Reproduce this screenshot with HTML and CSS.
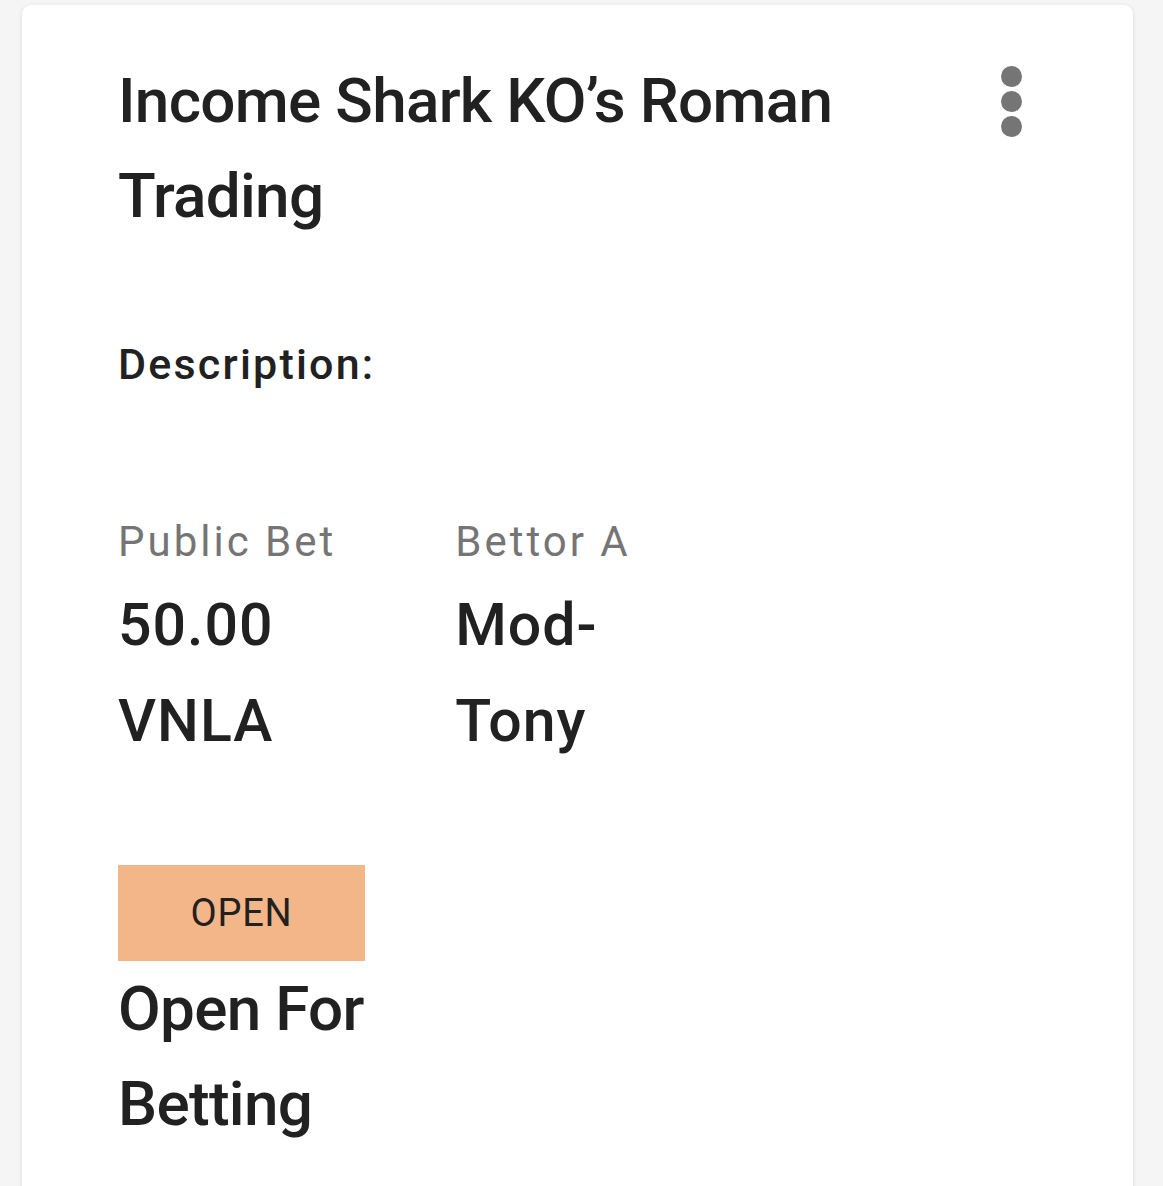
FILE: index.html
```html
<!DOCTYPE html>
<html lang="en">
<head>
<meta charset="utf-8">
<link rel="stylesheet" href="styles.css">
</head>
<body>
<div class="card">
  <div class="header">
    <h1 class="title">Income Shark KO’s Roman Trading</h1>
    <div class="kebab" aria-label="More options">
      <span class="dot"></span><span class="dot"></span><span class="dot"></span>
    </div>
  </div>
  <div class="desc">Description:</div>
  <div class="stats">
    <div class="stat">
      <div class="label">Public Bet</div>
      <div class="value">50.00 VNLA</div>
    </div>
    <div class="stat">
      <div class="label">Bettor A</div>
      <div class="value">Mod-Tony</div>
    </div>
  </div>
  <div class="status">
    <div class="chip">OPEN</div>
    <div class="status-text">Open For Betting</div>
  </div>
</div>
</body>
</html>
```
FILE: styles.css
```css
html, body {
  margin: 0;
  padding: 0;
  background: #f5f5f5;
}
body {
  font-family: Roboto, "Liberation Sans", sans-serif;
  color: #212121;
  overflow: hidden;
  height: 1186px;
}
.card {
  margin: 5px 30px 0 22px;
  background: #ffffff;
  border-radius: 9px;
  box-shadow: 0 1px 4px rgba(0,0,0,0.12);
  padding: 48px 111px 60px 96px;
  min-height: 1300px;
  box-sizing: border-box;
}
.header {
  display: flex;
  align-items: flex-start;
  gap: 40px;
}
.title {
  flex: 1;
  margin: 0;
  font-size: 62px;
  font-weight: 500;
  line-height: 95px;
  letter-spacing: -0.7px;
  max-width: 800px;
}
.kebab {
  margin-left: auto;
  margin-top: 13px;
  display: flex;
  flex-direction: column;
  gap: 4px;
}
.dot {
  display: block;
  width: 21px;
  height: 21px;
  border-radius: 50%;
  background: #757575;
}
.desc {
  margin-top: 89px;
  font-size: 43px;
  font-weight: 500;
  line-height: 64px;
  letter-spacing: 2.2px;
}
.stats {
  margin-top: 114px;
  display: flex;
  gap: 119px;
}
.stat {
  width: min-content;
}
.label {
  white-space: nowrap;
  font-size: 42px;
  line-height: 63px;
  letter-spacing: 3px;
  color: #757575;
}
.value {
  margin-top: 4px;
  font-size: 59px;
  font-weight: 500;
  line-height: 96px;
  letter-spacing: 1px;
}
.status {
  margin-top: 96px;
  width: 247px;
}
.chip {
  height: 96px;
  background: #f2b688;
  display: flex;
  align-items: center;
  justify-content: center;
  font-size: 38px;
  letter-spacing: 0.8px;
  color: #212121;
}
.status-text {
  font-size: 62px;
  font-weight: 500;
  line-height: 95px;
  letter-spacing: -0.7px;
}
```
